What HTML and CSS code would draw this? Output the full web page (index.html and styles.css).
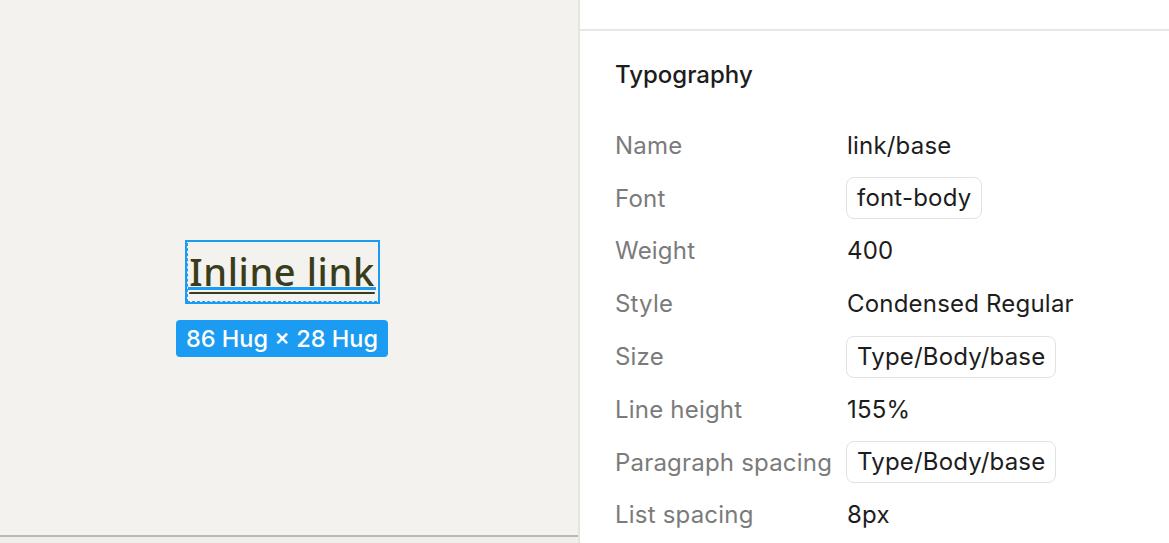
FILE: index.html
```html
<!DOCTYPE html>
<html lang="en">
<head>
  <meta charset="UTF-8" />
  <meta name="viewport" content="width=device-width, initial-scale=1.0" />
  <title>Inline link – Typography</title>
  <link rel="stylesheet" href="styles.css">
</head>
<body>
  <div class="canvas">
    <div class="stage">
      <div class="selection">
        <span class="link-text">Inline link</span>
        <span class="baseline"></span>
      </div>
      <div class="size-tag">86 Hug × 28 Hug</div>
    </div>
    <div class="canvas-edge"></div>
  </div>

  <div class="panel">
    <div class="panel-top"></div>
    <div class="section">
      <h2>Typography</h2>
      <div class="props">
        <div class="label">Name</div>
        <div class="value">link/base</div>

        <div class="label">Font</div>
        <div class="value"><span class="pill">font-body</span></div>

        <div class="label">Weight</div>
        <div class="value">400</div>

        <div class="label">Style</div>
        <div class="value">Condensed Regular</div>

        <div class="label">Size</div>
        <div class="value"><span class="pill">Type/Body/base</span></div>

        <div class="label">Line height</div>
        <div class="value">155%</div>

        <div class="label">Paragraph spacing</div>
        <div class="value"><span class="pill">Type/Body/base</span></div>

        <div class="label">List spacing</div>
        <div class="value">8px</div>
      </div>
    </div>
  </div>
</body>
</html>
```

FILE: styles.css
```css
* {
  box-sizing: border-box;
}

html, body {
  margin: 0;
  padding: 0;
  height: 100%;
  overflow: hidden;
}

body {
  display: flex;
  font-family: 'Inter', 'Noto Sans', sans-serif;
  background: #fff;
  color: #1d1d1d;
}

/* canvas */
.canvas {
  width: 580px;
  flex-shrink: 0;
  display: flex;
  flex-direction: column;
  background: #f3f2ee;
  border-right: 2px solid #e4e4e1;
}

.stage {
  flex: 1;
  display: flex;
  flex-direction: column;
  align-items: center;
  justify-content: center;
  padding: 62px 14px 0 0;
  gap: 16px;
}

.canvas-edge {
  height: 8px;
  border-top: 2px solid #b9b9b1;
  background: #f0efeb;
}

.selection {
  position: relative;
  width: 195px;
  height: 64px;
  border: 2px solid #1b9cf2;
  display: flex;
  align-items: flex-start;
  justify-content: center;
  padding-top: 9px;
}

.selection::before {
  content: "";
  position: absolute;
  left: 0;
  right: 1px;
  bottom: 0;
  top: 1px;
  border-left: 1px dashed #1b9cf2;
  border-bottom: 1px dashed #1b9cf2;
}

.link-text {
  font-family: 'Noto Sans', 'Open Sans', sans-serif;
  font-size: 38px;
  font-weight: 500;
  line-height: 40px;
  letter-spacing: 0.6px;
  color: #3a3d1b;
  text-decoration: underline;
  text-decoration-thickness: 2px;
  text-underline-offset: 6px;
}

.baseline {
  position: absolute;
  left: 1px;
  right: 2px;
  top: 45px;
  height: 3px;
  background: #1b9cf2;
}

.size-tag {
  background: #1b9cf2;
  color: #fff;
  font-size: 23.5px;
  font-weight: 500;
  line-height: 37px;
  padding: 0 10px;
  border-radius: 4px;
}

/* panel */
.panel {
  flex: 1;
}

.panel-top {
  height: 31px;
  border-bottom: 2px solid #e7e7e7;
}

.section {
  padding: 29px 35px 0;
}

h2 {
  margin: 0 0 29px;
  font-size: 24px;
  font-weight: 500;
  line-height: 30px;
  color: #1d1d1d;
}

.props {
  display: grid;
  grid-template-columns: 232px 1fr;
  grid-auto-rows: 52.8px;
  align-items: center;
  font-size: 24px;
  letter-spacing: 0.2px;
}

.label {
  color: #7b7b7b;
  white-space: nowrap;
}

.value {
  color: #1d1d1d;
}

.pill {
  display: inline-block;
  margin-left: -1px;
  padding: 0 10px;
  line-height: 40px;
  border: 1px solid #e2e2e2;
  border-radius: 8px;
}
```
